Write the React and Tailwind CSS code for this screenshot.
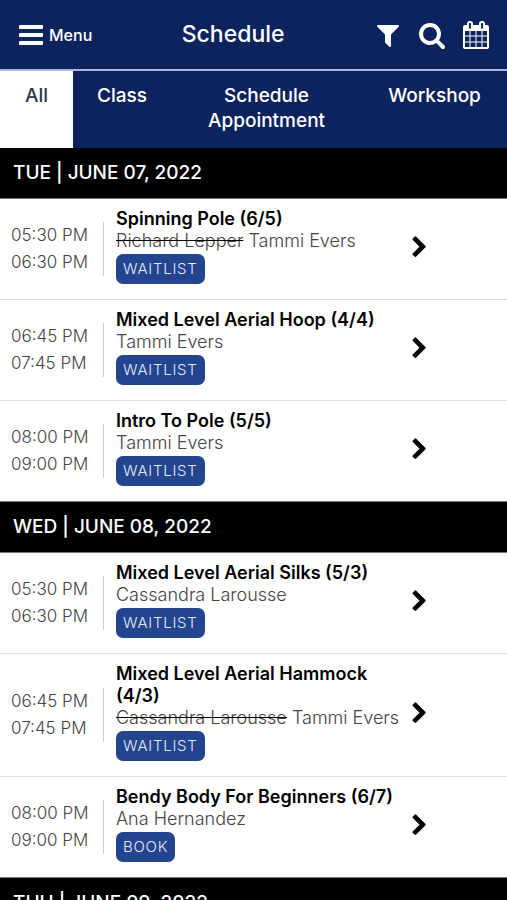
const icons = {
  bars: 'M1664 1344v128q0 26-19 45t-45 19h-1408q-26 0-45-19t-19-45v-128q0-26 19-45t45-19h1408q26 0 45 19t19 45zm0-512v128q0 26-19 45t-45 19h-1408q-26 0-45-19t-19-45v-128q0-26 19-45t45-19h1408q26 0 45 19t19 45zm0-512v128q0 26-19 45t-45 19h-1408q-26 0-45-19t-19-45v-128q0-26 19-45t45-19h1408q26 0 45 19t19 45z',
  filter: 'M1595 295q17 41-14 70l-493 493v742q0 42-39 59-13 5-25 5-27 0-45-19l-256-256q-19-19-19-45v-486l-493-493q-31-29-14-70 17-39 59-39h1280q42 0 59 39z',
  search: 'M1216 832q0-185-131.5-316.5t-316.5-131.5-316.5 131.5-131.5 316.5 131.5 316.5 316.5 131.5 316.5-131.5 131.5-316.5zm512 832q0 52-38 90t-90 38q-54 0-90-38l-343-342q-179 124-399 124-143 0-273.5-55.5t-225-150-150-225-55.5-273.5 55.5-273.5 150-225 225-150 273.5-55.5 273.5 55.5 225 150 150 225 55.5 273.5q0 220-124 399l343 343q37 37 37 90z',
  calendar: 'M192 1664h288v-288h-288v288zm352 0h320v-288h-320v288zm-352-352h288v-320h-288v320zm352 0h320v-320h-320v320zm-352-384h288v-288h-288v288zm736 736h320v-288h-320v288zm-384-736h320v-288h-320v288zm768 736h288v-288h-288v288zm-384-352h320v-320h-320v320zm-352-864v-288q0-13-9.5-22.5t-22.5-9.5h-64q-13 0-22.5 9.5t-9.5 22.5v288q0 13 9.5 22.5t22.5 9.5h64q13 0 22.5-9.5t9.5-22.5zm736 864h288v-320h-288v320zm-384-384h320v-288h-320v288zm384 0h288v-288h-288v288zm32-480v-288q0-13-9.5-22.5t-22.5-9.5h-64q-13 0-22.5 9.5t-9.5 22.5v288q0 13 9.5 22.5t22.5 9.5h64q13 0 22.5-9.5t9.5-22.5zm384-64v1280q0 52-38 90t-90 38h-1408q-52 0-90-38t-38-90v-1280q0-52 38-90t90-38h128v-96q0-66 47-113t113-47h64q66 0 113 47t47 113v96h384v-96q0-66 47-113t113-47h64q66 0 113 47t47 113v96h128q52 0 90 38t38 90z',
  chevron: 'M1363 877l-742 742q-19 19-45 19t-45-19l-166-166q-19-19-19-45t19-45l531-531-531-531q-19-19-19-45t19-45l166-166q19-19 45-19t45 19l742 742q19 19 19 45t-19 45z',
};

const tabs = ['All', 'Class', 'Schedule Appointment', 'Workshop'];

const days = [
  {
    date: 'TUE | JUNE 07, 2022',
    classes: [
      { start: '05:30 PM', end: '06:30 PM', name: 'Spinning Pole (6/5)', replaced: 'Richard Lepper', teacher: 'Tammi Evers', action: 'WAITLIST' },
      { start: '06:45 PM', end: '07:45 PM', name: 'Mixed Level Aerial Hoop (4/4)', teacher: 'Tammi Evers', action: 'WAITLIST' },
      { start: '08:00 PM', end: '09:00 PM', name: 'Intro To Pole (5/5)', teacher: 'Tammi Evers', action: 'WAITLIST' },
    ],
  },
  {
    date: 'WED | JUNE 08, 2022',
    classes: [
      { start: '05:30 PM', end: '06:30 PM', name: 'Mixed Level Aerial Silks (5/3)', teacher: 'Cassandra Larousse', action: 'WAITLIST' },
      { start: '06:45 PM', end: '07:45 PM', name: 'Mixed Level Aerial Hammock (4/3)', replaced: 'Cassandra Larousse', teacher: 'Tammi Evers', action: 'WAITLIST' },
      { start: '08:00 PM', end: '09:00 PM', name: 'Bendy Body For Beginners (6/7)', teacher: 'Ana Hernandez', action: 'BOOK' },
    ],
  },
  { date: 'THU | JUNE 09, 2022', classes: [] },
];

function Icon({ name, className = 'size-7' }) {
  return (
    <svg viewBox="0 0 1792 1792" fill="currentColor" aria-hidden="true" className={className}>
      <path d={icons[name]} />
    </svg>
  );
}

function Header() {
  return (
    <header className="flex h-[71px] shrink-0 items-center justify-between border-b-2 border-[#a9b8dc] bg-[#0c235d] px-[17px] text-white">
      <button className="flex items-center gap-1 text-base font-medium">
        <Icon name="bars" />
        Menu
      </button>
      <h1 className="text-[23px] font-medium">Schedule</h1>
      <div className="flex gap-4">
        <button aria-label="Filter"><Icon name="filter" /></button>
        <button aria-label="Search"><Icon name="search" /></button>
        <button aria-label="Calendar"><Icon name="calendar" /></button>
      </div>
    </header>
  );
}

function Tabs() {
  return (
    <nav className="grid h-[77px] shrink-0 grid-cols-[73fr_98fr_191fr_145fr] bg-[#0c235d] text-[19px] leading-[25px] font-medium">
      {tabs.map((tab, i) => (
        <button
          key={tab}
          className={`flex justify-center px-5 pt-3 text-center ${i === 0 ? 'bg-white text-[#2b3550]' : 'text-white'}`}
        >
          {tab}
        </button>
      ))}
    </nav>
  );
}

function ClassRow({ item }) {
  return (
    <li className="flex items-center border-b border-[#e2e2e2] last:border-[#777777]">
      <div className="w-26 shrink-0 border-r border-[#cccccc] pl-[11px] text-[17px] leading-[27px] font-light text-[#444444]">
        <p>{item.start}</p>
        <p>{item.end}</p>
      </div>
      <div className="w-3/5 pt-[9px] pb-[15px] pl-3 text-lg leading-[22px]">
        <h3 className="font-semibold text-black">{item.name}</h3>
        <p className="font-light whitespace-nowrap text-[#444444]">
          {item.replaced && <><s className="decoration-black">{item.replaced}</s> </>}
          {item.teacher}
        </p>
        <button className="mt-0.5 block h-[30px] rounded-[7px] bg-[#23448f] px-[7px] text-[15px] font-light tracking-wider text-[#e4eaf8]">
          {item.action}
        </button>
      </div>
      <button aria-label={`Open ${item.name}`} className="pb-1 text-black">
        <Icon name="chevron" className="size-[23px]" />
      </button>
    </li>
  );
}

export default function App() {
  return (
    <div className="flex h-screen flex-col overflow-hidden bg-white font-['Inter',sans-serif]">
      <Header />
      <Tabs />
      <main className="min-h-0 flex-1 overflow-y-auto [scrollbar-width:none]">
        {days.map((day) => (
          <section key={day.date}>
            <h2 className="flex h-[51px] items-center border-b border-[#777777] bg-black px-[13px] text-[19px] font-medium text-white">
              {day.date}
            </h2>
            <ul>
              {day.classes.map((item) => <ClassRow key={item.start} item={item} />)}
            </ul>
          </section>
        ))}
      </main>
    </div>
  );
}
